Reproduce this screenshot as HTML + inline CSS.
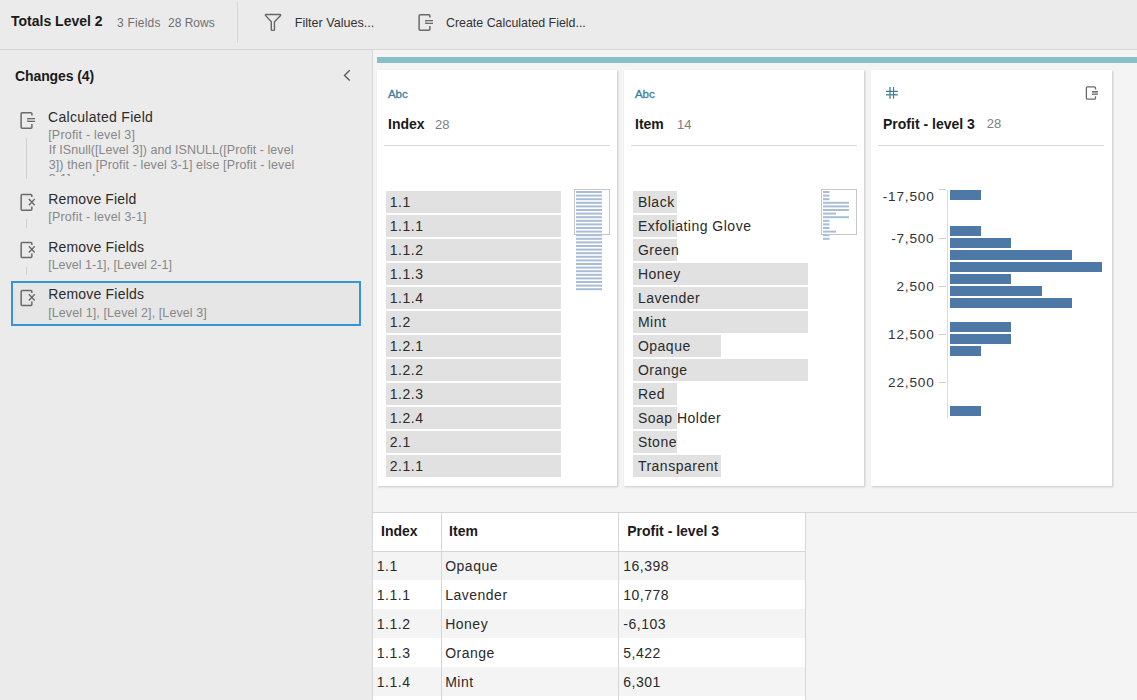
<!DOCTYPE html>
<html><head><meta charset="utf-8"><style>
html,body{margin:0;padding:0;width:1137px;height:700px;overflow:hidden;background:#f4f4f4;font-family:"Liberation Sans", sans-serif;}
.t{position:absolute;white-space:pre;line-height:1;font-family:"Liberation Sans", sans-serif;}
.r{position:absolute;}
</style></head><body>
<div class="r" style="left:0px;top:0px;width:1137px;height:49px;background:#ebebeb;"></div>
<div class="r" style="left:0px;top:49px;width:1137px;height:1px;background:#d6d6d6;"></div>
<div class="t" style="left:11px;top:14.15px;font-size:14px;color:#1a1a1a;font-weight:bold;letter-spacing:0px;">Totals Level 2</div>
<div class="t" style="left:117px;top:16.84px;font-size:12px;color:#707070;font-weight:normal;letter-spacing:0.2px;">3 Fields</div>
<div class="t" style="left:168px;top:16.84px;font-size:12px;color:#707070;font-weight:normal;letter-spacing:0px;">28 Rows</div>
<div class="r" style="left:237px;top:2px;width:1px;height:41px;background:#d6d6d6;"></div>
<svg class="r" style="left:261px;top:10px" width="24" height="24" viewBox="0 0 24 24"><path d="M4.9 4.5 H19.1 Q19.6 4.5 19.6 5 V5.4 L13.45 11.8 V19.7 Q13.45 20.4 12.75 20.4 H11 Q10.3 20.4 10.3 19.7 V11.8 L4.4 5.4 V5 Q4.4 4.5 4.9 4.5 Z" fill="none" stroke="#666" stroke-width="1.4" stroke-linejoin="round"/></svg>
<div class="t" style="left:294.7px;top:16.53px;font-size:12.6px;color:#333;font-weight:normal;letter-spacing:0px;">Filter Values...</div>
<svg class="r" style="left:414px;top:10px" width="24" height="24" viewBox="0 0 24 24"><path d="M15.9 7.5 V5.7 Q15.9 4.7 14.9 4.7 H6.1 Q5.1 4.7 5.1 5.7 V19.2 Q5.1 20.2 6.1 20.2 H14.9 Q15.9 20.2 15.9 19.2 V15.9" fill="none" stroke="#6a6a6a" stroke-width="1.5"/><rect x="11.3" y="10.45" width="7.7" height="3" fill="#c4c4c4"/><path d="M11.3 10.45 H19 M11.3 13.5 H19" stroke="#6a6a6a" stroke-width="1.1"/><path d="M11.85 10.45 V13.5" stroke="#6a6a6a" stroke-width="1" opacity="0.6"/></svg>
<div class="t" style="left:446px;top:16.70px;font-size:12.4px;color:#333;font-weight:normal;letter-spacing:0px;">Create Calculated Field...</div>
<div class="r" style="left:0px;top:50px;width:372px;height:650px;background:#ebebeb;"></div>
<div class="r" style="left:372px;top:50px;width:1px;height:650px;background:#d6d6d6;"></div>
<div class="t" style="left:15px;top:68.75px;font-size:14px;color:#1a1a1a;font-weight:bold;letter-spacing:-0.1px;">Changes (4)</div>
<svg class="r" style="left:342px;top:68px" width="10" height="15" viewBox="0 0 10 15"><path d="M7.7 2.3 L2.5 7.4 L7.7 12.5" fill="none" stroke="#5a5a5a" stroke-width="1.4"/></svg>
<svg class="r" style="left:16px;top:108px" width="24" height="24" viewBox="0 0 24 24"><path d="M15.9 7.5 V5.7 Q15.9 4.7 14.9 4.7 H6.1 Q5.1 4.7 5.1 5.7 V19.2 Q5.1 20.2 6.1 20.2 H14.9 Q15.9 20.2 15.9 19.2 V15.9" fill="none" stroke="#6a6a6a" stroke-width="1.5"/><rect x="11.3" y="10.45" width="7.7" height="3" fill="#c4c4c4"/><path d="M11.3 10.45 H19 M11.3 13.5 H19" stroke="#6a6a6a" stroke-width="1.1"/><path d="M11.85 10.45 V13.5" stroke="#6a6a6a" stroke-width="1" opacity="0.6"/></svg>
<div class="t" style="left:48.0px;top:109.75px;font-size:14px;color:#2b2b2b;font-weight:normal;letter-spacing:0.3px;">Calculated Field</div>
<div class="t" style="left:48.2px;top:129.02px;font-size:12.5px;color:#878787;font-weight:normal;letter-spacing:0.2px;">[Profit - level 3]</div>
<div class="r" style="left:48px;top:143px;width:300px;height:32.5px;overflow:hidden">
<div class="t" style="left:0.7px;top:1.02px;font-size:12.5px;color:#878787;letter-spacing:0.05px">If ISnull([Level 3]) and ISNULL([Profit - level</div>
<div class="t" style="left:0.7px;top:15.62px;font-size:12.5px;color:#878787;letter-spacing:0.12px">3]) then [Profit - level 3-1] else [Profit - level</div>
<div class="t" style="left:0.7px;top:30.22px;font-size:12.5px;color:#878787;letter-spacing:0.1px">3-1] end</div>
</div>
<div class="r" style="left:26px;top:138px;width:1px;height:41px;background:#d0d0d0;"></div>
<svg class="r" style="left:16px;top:190px" width="24" height="24" viewBox="0 0 24 24"><path d="M15.85 7.1 V5.6 Q15.85 4.6 14.85 4.6 H6.15 Q5.15 4.6 5.15 5.6 V19.30 Q5.15 20.3 6.15 20.3 H14.85 Q15.85 20.3 15.85 19.30 V16.50" fill="none" stroke="#6a6a6a" stroke-width="1.5"/><path d="M12.9 9.10 L18.7 15.30 M18.7 9.10 L12.9 15.30" stroke="#6a6a6a" stroke-width="1.4"/></svg>
<div class="t" style="left:48.3px;top:191.95px;font-size:14px;color:#2b2b2b;font-weight:normal;letter-spacing:0.15px;">Remove Field</div>
<div class="t" style="left:48.3px;top:210.62px;font-size:12.5px;color:#878787;font-weight:normal;letter-spacing:0.2px;">[Profit - level 3-1]</div>
<div class="r" style="left:26px;top:219px;width:1px;height:9px;background:#d0d0d0;"></div>
<svg class="r" style="left:16px;top:238px" width="24" height="24" viewBox="0 0 24 24"><path d="M15.85 7.1 V5.6 Q15.85 4.6 14.85 4.6 H6.15 Q5.15 4.6 5.15 5.6 V18.40 Q5.15 19.4 6.15 19.4 H14.85 Q15.85 19.4 15.85 18.40 V15.60" fill="none" stroke="#6a6a6a" stroke-width="1.5"/><path d="M12.9 8.20 L18.7 14.40 M18.7 8.20 L12.9 14.40" stroke="#6a6a6a" stroke-width="1.4"/></svg>
<div class="t" style="left:48.2px;top:240.05px;font-size:14px;color:#2b2b2b;font-weight:normal;letter-spacing:0.2px;">Remove Fields</div>
<div class="t" style="left:48.2px;top:259.02px;font-size:12.5px;color:#878787;font-weight:normal;letter-spacing:0px;">[Level 1-1], [Level 2-1]</div>
<div class="r" style="left:26px;top:267px;width:1px;height:8px;background:#d0d0d0;"></div>
<div class="r" style="left:11px;top:281px;width:346px;height:41px;border:2px solid #3894da;background:#e6e6e6"></div>
<svg class="r" style="left:16px;top:286px" width="24" height="24" viewBox="0 0 24 24"><path d="M15.85 7.1 V5.6 Q15.85 4.6 14.85 4.6 H6.15 Q5.15 4.6 5.15 5.6 V18.40 Q5.15 19.4 6.15 19.4 H14.85 Q15.85 19.4 15.85 18.40 V15.60" fill="none" stroke="#6a6a6a" stroke-width="1.5"/><path d="M12.9 8.20 L18.7 14.40 M18.7 8.20 L12.9 14.40" stroke="#6a6a6a" stroke-width="1.4"/></svg>
<div class="t" style="left:48.2px;top:287.45px;font-size:14px;color:#2b2b2b;font-weight:normal;letter-spacing:0.2px;">Remove Fields</div>
<div class="t" style="left:48.2px;top:306.62px;font-size:12.5px;color:#878787;font-weight:normal;letter-spacing:0.1px;">[Level 1], [Level 2], [Level 3]</div>
<div class="r" style="left:373px;top:50px;width:764px;height:650px;background:#f4f4f4;"></div>
<div class="r" style="left:377px;top:57px;width:760px;height:6px;background:#89c0c8;"></div>
<div class="r" style="left:377px;top:70px;width:240px;height:416px;background:#fff;box-shadow:1px 1px 2px rgba(0,0,0,0.18)"></div>
<div class="r" style="left:384px;top:145px;width:226px;height:1px;background:#d8d8d8;"></div>
<div class="t" style="left:388px;top:88.08px;font-size:11.6px;color:#3b7d9b;font-weight:normal;letter-spacing:-0.15px;-webkit-text-stroke:0.3px #3b7d9b">Abc</div>
<div class="t" style="left:388px;top:117.15px;font-size:14px;color:#1a1a1a;font-weight:bold;letter-spacing:0px;">Index</div>
<div class="t" style="left:435px;top:117.60px;font-size:13px;color:#7e7e7e;font-weight:normal;letter-spacing:0px;">28</div>
<div class="r" style="left:386px;top:191px;width:175px;height:22px;background:#e1e1e1;"></div>
<div class="t" style="left:389.7px;top:195.25px;font-size:14px;color:#2a2a2a;font-weight:normal;letter-spacing:0.55px;">1.1</div>
<div class="r" style="left:386px;top:215px;width:175px;height:22px;background:#e1e1e1;"></div>
<div class="t" style="left:389.7px;top:219.25px;font-size:14px;color:#2a2a2a;font-weight:normal;letter-spacing:0.55px;">1.1.1</div>
<div class="r" style="left:386px;top:239px;width:175px;height:22px;background:#e1e1e1;"></div>
<div class="t" style="left:389.7px;top:243.25px;font-size:14px;color:#2a2a2a;font-weight:normal;letter-spacing:0.55px;">1.1.2</div>
<div class="r" style="left:386px;top:263px;width:175px;height:22px;background:#e1e1e1;"></div>
<div class="t" style="left:389.7px;top:267.25px;font-size:14px;color:#2a2a2a;font-weight:normal;letter-spacing:0.55px;">1.1.3</div>
<div class="r" style="left:386px;top:287px;width:175px;height:22px;background:#e1e1e1;"></div>
<div class="t" style="left:389.7px;top:291.25px;font-size:14px;color:#2a2a2a;font-weight:normal;letter-spacing:0.55px;">1.1.4</div>
<div class="r" style="left:386px;top:311px;width:175px;height:22px;background:#e1e1e1;"></div>
<div class="t" style="left:389.7px;top:315.25px;font-size:14px;color:#2a2a2a;font-weight:normal;letter-spacing:0.55px;">1.2</div>
<div class="r" style="left:386px;top:335px;width:175px;height:22px;background:#e1e1e1;"></div>
<div class="t" style="left:389.7px;top:339.25px;font-size:14px;color:#2a2a2a;font-weight:normal;letter-spacing:0.55px;">1.2.1</div>
<div class="r" style="left:386px;top:359px;width:175px;height:22px;background:#e1e1e1;"></div>
<div class="t" style="left:389.7px;top:363.25px;font-size:14px;color:#2a2a2a;font-weight:normal;letter-spacing:0.55px;">1.2.2</div>
<div class="r" style="left:386px;top:383px;width:175px;height:22px;background:#e1e1e1;"></div>
<div class="t" style="left:389.7px;top:387.25px;font-size:14px;color:#2a2a2a;font-weight:normal;letter-spacing:0.55px;">1.2.3</div>
<div class="r" style="left:386px;top:407px;width:175px;height:22px;background:#e1e1e1;"></div>
<div class="t" style="left:389.7px;top:411.25px;font-size:14px;color:#2a2a2a;font-weight:normal;letter-spacing:0.55px;">1.2.4</div>
<div class="r" style="left:386px;top:431px;width:175px;height:22px;background:#e1e1e1;"></div>
<div class="t" style="left:389.7px;top:435.25px;font-size:14px;color:#2a2a2a;font-weight:normal;letter-spacing:0.55px;">2.1</div>
<div class="r" style="left:386px;top:455px;width:175px;height:22px;background:#e1e1e1;"></div>
<div class="t" style="left:389.7px;top:459.25px;font-size:14px;color:#2a2a2a;font-weight:normal;letter-spacing:0.55px;">2.1.1</div>
<div class="r" style="left:574px;top:189px;width:34px;height:44px;border:1px solid #c8c8c8"></div>
<svg class="r" style="left:570px;top:185px" width="40" height="110" viewBox="570 185 40 110"><rect x="576" y="191.00" width="26" height="2" fill="#a9bdd6"/><rect x="576" y="194.60" width="26" height="2" fill="#a9bdd6"/><rect x="576" y="198.20" width="26" height="2" fill="#a9bdd6"/><rect x="576" y="201.80" width="26" height="2" fill="#a9bdd6"/><rect x="576" y="205.40" width="26" height="2" fill="#a9bdd6"/><rect x="576" y="209.00" width="26" height="2" fill="#a9bdd6"/><rect x="576" y="212.60" width="26" height="2" fill="#a9bdd6"/><rect x="576" y="216.20" width="26" height="2" fill="#a9bdd6"/><rect x="576" y="219.80" width="26" height="2" fill="#a9bdd6"/><rect x="576" y="223.40" width="26" height="2" fill="#a9bdd6"/><rect x="576" y="227.00" width="26" height="2" fill="#a9bdd6"/><rect x="576" y="230.60" width="26" height="2" fill="#a9bdd6"/><rect x="576" y="234.20" width="26" height="2" fill="#a9bdd6"/><rect x="576" y="237.80" width="26" height="2" fill="#a9bdd6"/><rect x="576" y="241.40" width="26" height="2" fill="#a9bdd6"/><rect x="576" y="245.00" width="26" height="2" fill="#a9bdd6"/><rect x="576" y="248.60" width="26" height="2" fill="#a9bdd6"/><rect x="576" y="252.20" width="26" height="2" fill="#a9bdd6"/><rect x="576" y="255.80" width="26" height="2" fill="#a9bdd6"/><rect x="576" y="259.40" width="26" height="2" fill="#a9bdd6"/><rect x="576" y="263.00" width="26" height="2" fill="#a9bdd6"/><rect x="576" y="266.60" width="26" height="2" fill="#a9bdd6"/><rect x="576" y="270.20" width="26" height="2" fill="#a9bdd6"/><rect x="576" y="273.80" width="26" height="2" fill="#a9bdd6"/><rect x="576" y="277.40" width="26" height="2" fill="#a9bdd6"/><rect x="576" y="281.00" width="26" height="2" fill="#a9bdd6"/><rect x="576" y="284.60" width="26" height="2" fill="#a9bdd6"/><rect x="576" y="288.20" width="26" height="2" fill="#a9bdd6"/></svg>
<div class="r" style="left:624px;top:70px;width:240px;height:416px;background:#fff;box-shadow:1px 1px 2px rgba(0,0,0,0.18)"></div>
<div class="r" style="left:631px;top:145px;width:226px;height:1px;background:#d8d8d8;"></div>
<div class="t" style="left:635px;top:88.08px;font-size:11.6px;color:#3b7d9b;font-weight:normal;letter-spacing:-0.15px;-webkit-text-stroke:0.3px #3b7d9b">Abc</div>
<div class="t" style="left:635px;top:117.15px;font-size:14px;color:#1a1a1a;font-weight:bold;letter-spacing:0px;">Item</div>
<div class="t" style="left:677px;top:117.60px;font-size:13px;color:#7e7e7e;font-weight:normal;letter-spacing:0px;">14</div>
<div class="r" style="left:633px;top:191px;width:44px;height:22px;background:#e1e1e1;"></div>
<div class="t" style="left:637.9px;top:194.75px;font-size:14px;color:#2a2a2a;font-weight:normal;letter-spacing:0.5px;">Black</div>
<div class="r" style="left:633px;top:215px;width:44px;height:22px;background:#e1e1e1;"></div>
<div class="t" style="left:637.9px;top:218.75px;font-size:14px;color:#2a2a2a;font-weight:normal;letter-spacing:0.5px;">Exfoliating Glove</div>
<div class="r" style="left:633px;top:239px;width:44px;height:22px;background:#e1e1e1;"></div>
<div class="t" style="left:637.9px;top:242.75px;font-size:14px;color:#2a2a2a;font-weight:normal;letter-spacing:0.5px;">Green</div>
<div class="r" style="left:633px;top:263px;width:175px;height:22px;background:#e1e1e1;"></div>
<div class="t" style="left:637.9px;top:266.75px;font-size:14px;color:#2a2a2a;font-weight:normal;letter-spacing:0.5px;">Honey</div>
<div class="r" style="left:633px;top:287px;width:175px;height:22px;background:#e1e1e1;"></div>
<div class="t" style="left:637.9px;top:290.75px;font-size:14px;color:#2a2a2a;font-weight:normal;letter-spacing:0.5px;">Lavender</div>
<div class="r" style="left:633px;top:311px;width:175px;height:22px;background:#e1e1e1;"></div>
<div class="t" style="left:637.9px;top:314.75px;font-size:14px;color:#2a2a2a;font-weight:normal;letter-spacing:0.5px;">Mint</div>
<div class="r" style="left:633px;top:335px;width:88px;height:22px;background:#e1e1e1;"></div>
<div class="t" style="left:637.9px;top:338.75px;font-size:14px;color:#2a2a2a;font-weight:normal;letter-spacing:0.5px;">Opaque</div>
<div class="r" style="left:633px;top:359px;width:175px;height:22px;background:#e1e1e1;"></div>
<div class="t" style="left:637.9px;top:362.75px;font-size:14px;color:#2a2a2a;font-weight:normal;letter-spacing:0.5px;">Orange</div>
<div class="r" style="left:633px;top:383px;width:44px;height:22px;background:#e1e1e1;"></div>
<div class="t" style="left:637.9px;top:386.75px;font-size:14px;color:#2a2a2a;font-weight:normal;letter-spacing:0.5px;">Red</div>
<div class="r" style="left:633px;top:407px;width:44px;height:22px;background:#e1e1e1;"></div>
<div class="t" style="left:637.9px;top:410.75px;font-size:14px;color:#2a2a2a;font-weight:normal;letter-spacing:0.5px;">Soap Holder</div>
<div class="r" style="left:633px;top:431px;width:44px;height:22px;background:#e1e1e1;"></div>
<div class="t" style="left:637.9px;top:434.75px;font-size:14px;color:#2a2a2a;font-weight:normal;letter-spacing:0.5px;">Stone</div>
<div class="r" style="left:633px;top:455px;width:88px;height:22px;background:#e1e1e1;"></div>
<div class="t" style="left:637.9px;top:458.75px;font-size:14px;color:#2a2a2a;font-weight:normal;letter-spacing:0.5px;">Transparent</div>
<div class="r" style="left:821px;top:189px;width:34px;height:44px;border:1px solid #c8c8c8"></div>
<svg class="r" style="left:817px;top:185px" width="40" height="60" viewBox="817 185 40 60"><rect x="823" y="191.00" width="6.5" height="2" fill="#a9bdd6"/><rect x="823" y="194.60" width="6.5" height="2" fill="#a9bdd6"/><rect x="823" y="198.20" width="6.5" height="2" fill="#a9bdd6"/><rect x="823" y="201.80" width="26.0" height="2" fill="#a9bdd6"/><rect x="823" y="205.40" width="26.0" height="2" fill="#a9bdd6"/><rect x="823" y="209.00" width="26.0" height="2" fill="#a9bdd6"/><rect x="823" y="212.60" width="13.0" height="2" fill="#a9bdd6"/><rect x="823" y="216.20" width="26.0" height="2" fill="#a9bdd6"/><rect x="823" y="219.80" width="6.5" height="2" fill="#a9bdd6"/><rect x="823" y="223.40" width="6.5" height="2" fill="#a9bdd6"/><rect x="823" y="227.00" width="6.5" height="2" fill="#a9bdd6"/><rect x="823" y="230.60" width="13.0" height="2" fill="#a9bdd6"/><rect x="823" y="234.20" width="6.5" height="2" fill="#a9bdd6"/><rect x="823" y="237.80" width="6.5" height="2" fill="#a9bdd6"/></svg>
<div class="r" style="left:871px;top:70px;width:241px;height:416px;background:#fff;box-shadow:1px 1px 2px rgba(0,0,0,0.18)"></div>
<div class="r" style="left:878px;top:145px;width:226px;height:1px;background:#d8d8d8;"></div>
<svg class="r" style="left:880px;top:81px" width="24" height="24" viewBox="0 0 24 24"><path d="M10 6 V17.8 M6 13.8 H17.8" stroke="#3f7c9a" stroke-width="1.5" opacity="0.85"/><path d="M13.55 6 V17.8 M6 10.4 H17.8" stroke="#3f7c9a" stroke-width="1.1"/></svg>
<div class="t" style="left:883px;top:116.95px;font-size:14px;color:#1a1a1a;font-weight:bold;letter-spacing:0px;">Profit - level 3</div>
<div class="t" style="left:986.7px;top:117.30px;font-size:13px;color:#7e7e7e;font-weight:normal;letter-spacing:0px;">28</div>
<svg class="r" style="left:1085px;top:85px" width="14" height="16" viewBox="0 0 14 16"><path d="M10.5 4.5 V3 Q10.5 1.8 9.3 1.8 H2.6 Q1.4 1.8 1.4 3 V13 Q1.4 14.2 2.6 14.2 H9.3 Q10.5 14.2 10.5 13 V11.3" fill="none" stroke="#6a6a6a" stroke-width="1.3"/><rect x="7" y="6.6" width="6" height="2.7" fill="#c4c4c4"/><path d="M7 6.6 H13 M7 9.3 H13" stroke="#6a6a6a" stroke-width="1.1"/></svg>
<div class="r" style="left:946.5px;top:190px;width:1.5px;height:228px;background:#dcdcdc;"></div>
<div class="r" style="left:939px;top:189px;width:7px;height:1px;background:#d0d0d0;"></div>
<div class="r" style="left:939px;top:238px;width:7px;height:1px;background:#d0d0d0;"></div>
<div class="r" style="left:939px;top:286px;width:7px;height:1px;background:#d0d0d0;"></div>
<div class="r" style="left:939px;top:334px;width:7px;height:1px;background:#d0d0d0;"></div>
<div class="r" style="left:939px;top:382px;width:7px;height:1px;background:#d0d0d0;"></div>
<div class="t" style="right:202.5px;top:190.19px;font-size:13.6px;color:#333;letter-spacing:0.8px">-17,500</div>
<div class="t" style="right:202.5px;top:231.99px;font-size:13.6px;color:#333;letter-spacing:0.8px">-7,500</div>
<div class="t" style="right:202.5px;top:280.29px;font-size:13.6px;color:#333;letter-spacing:0.8px">2,500</div>
<div class="t" style="right:202.5px;top:328.29px;font-size:13.6px;color:#333;letter-spacing:0.8px">12,500</div>
<div class="t" style="right:202.5px;top:376.29px;font-size:13.6px;color:#333;letter-spacing:0.8px">22,500</div>
<div class="r" style="left:950px;top:190px;width:31px;height:10px;background:#4e79a7;"></div>
<div class="r" style="left:950px;top:226px;width:31px;height:10px;background:#4e79a7;"></div>
<div class="r" style="left:950px;top:238px;width:61px;height:10px;background:#4e79a7;"></div>
<div class="r" style="left:950px;top:250px;width:122px;height:10px;background:#4e79a7;"></div>
<div class="r" style="left:950px;top:262px;width:152px;height:10px;background:#4e79a7;"></div>
<div class="r" style="left:950px;top:274px;width:61px;height:10px;background:#4e79a7;"></div>
<div class="r" style="left:950px;top:286px;width:92px;height:10px;background:#4e79a7;"></div>
<div class="r" style="left:950px;top:298px;width:122px;height:10px;background:#4e79a7;"></div>
<div class="r" style="left:950px;top:322px;width:61px;height:10px;background:#4e79a7;"></div>
<div class="r" style="left:950px;top:334px;width:61px;height:10px;background:#4e79a7;"></div>
<div class="r" style="left:950px;top:346px;width:31px;height:10px;background:#4e79a7;"></div>
<div class="r" style="left:950px;top:406px;width:31px;height:10px;background:#4e79a7;"></div>
<div class="r" style="left:372px;top:512px;width:765px;height:1px;background:#d6d6d6;"></div>
<div class="r" style="left:373px;top:513px;width:432px;height:38px;background:#ffffff;"></div>
<div class="r" style="left:373px;top:551px;width:432px;height:1px;background:#d6d6d6;"></div>
<div class="r" style="left:373px;top:552px;width:432px;height:28px;background:#f4f4f4;"></div>
<div class="r" style="left:373px;top:580px;width:432px;height:29px;background:#ffffff;"></div>
<div class="r" style="left:373px;top:609px;width:432px;height:29px;background:#f4f4f4;"></div>
<div class="r" style="left:373px;top:638px;width:432px;height:29px;background:#ffffff;"></div>
<div class="r" style="left:373px;top:667px;width:432px;height:29px;background:#f4f4f4;"></div>
<div class="r" style="left:373px;top:696px;width:432px;height:29px;background:#ffffff;"></div>
<div class="r" style="left:441px;top:513px;width:1px;height:187px;background:#d6d6d6;"></div>
<div class="r" style="left:618px;top:513px;width:1px;height:187px;background:#d6d6d6;"></div>
<div class="r" style="left:805px;top:513px;width:1px;height:187px;background:#d6d6d6;"></div>
<div class="t" style="left:381px;top:523.85px;font-size:14px;color:#1a1a1a;font-weight:bold;letter-spacing:0px;">Index</div>
<div class="t" style="left:449.1px;top:523.85px;font-size:14px;color:#1a1a1a;font-weight:bold;letter-spacing:0px;">Item</div>
<div class="t" style="left:627.2px;top:523.85px;font-size:14px;color:#1a1a1a;font-weight:bold;letter-spacing:0px;">Profit - level 3</div>
<div class="t" style="left:376.7px;top:559.15px;font-size:14px;color:#2a2a2a;font-weight:normal;letter-spacing:0.55px;">1.1</div>
<div class="t" style="left:445.2px;top:559.15px;font-size:14px;color:#2a2a2a;font-weight:normal;letter-spacing:0.5px;">Opaque</div>
<div class="t" style="left:623.3px;top:559.15px;font-size:14px;color:#2a2a2a;font-weight:normal;letter-spacing:0.5px;">16,398</div>
<div class="t" style="left:376.7px;top:588.15px;font-size:14px;color:#2a2a2a;font-weight:normal;letter-spacing:0.55px;">1.1.1</div>
<div class="t" style="left:445.2px;top:588.15px;font-size:14px;color:#2a2a2a;font-weight:normal;letter-spacing:0.5px;">Lavender</div>
<div class="t" style="left:623.3px;top:588.15px;font-size:14px;color:#2a2a2a;font-weight:normal;letter-spacing:0.5px;">10,778</div>
<div class="t" style="left:376.7px;top:617.15px;font-size:14px;color:#2a2a2a;font-weight:normal;letter-spacing:0.55px;">1.1.2</div>
<div class="t" style="left:445.2px;top:617.15px;font-size:14px;color:#2a2a2a;font-weight:normal;letter-spacing:0.5px;">Honey</div>
<div class="t" style="left:623.3px;top:617.15px;font-size:14px;color:#2a2a2a;font-weight:normal;letter-spacing:0.5px;">-6,103</div>
<div class="t" style="left:376.7px;top:646.15px;font-size:14px;color:#2a2a2a;font-weight:normal;letter-spacing:0.55px;">1.1.3</div>
<div class="t" style="left:445.2px;top:646.15px;font-size:14px;color:#2a2a2a;font-weight:normal;letter-spacing:0.5px;">Orange</div>
<div class="t" style="left:623.3px;top:646.15px;font-size:14px;color:#2a2a2a;font-weight:normal;letter-spacing:0.5px;">5,422</div>
<div class="t" style="left:376.7px;top:675.15px;font-size:14px;color:#2a2a2a;font-weight:normal;letter-spacing:0.55px;">1.1.4</div>
<div class="t" style="left:445.2px;top:675.15px;font-size:14px;color:#2a2a2a;font-weight:normal;letter-spacing:0.5px;">Mint</div>
<div class="t" style="left:623.3px;top:675.15px;font-size:14px;color:#2a2a2a;font-weight:normal;letter-spacing:0.5px;">6,301</div>
</body></html>
